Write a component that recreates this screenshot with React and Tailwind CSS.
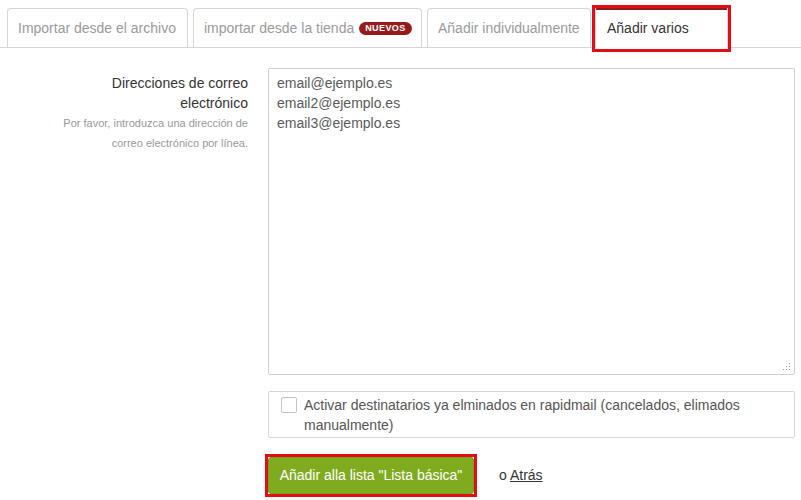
const tabs = [
  { label: 'Importar desde el archivo', w: 'w-[181px]' },
  { label: 'importar desde la tienda', badge: 'NUEVOS', w: 'w-[229px]' },
  { label: 'Añadir individualmente', w: 'w-[164px]' },
]

const emails = ['email@ejemplo.es', 'email2@ejemplo.es', 'email3@ejemplo.es']

function Grip() {
  return (
    <svg width="8" height="8" viewBox="0 0 8 8" className="self-end">
      <rect x="6" y="0" width="1" height="1" fill="#9a9a9a" />
      <rect x="6" y="3" width="1" height="1" fill="#9a9a9a" />
      <rect x="6" y="6" width="1" height="1" fill="#9a9a9a" />
      <rect x="3" y="3" width="1" height="1" fill="#9a9a9a" />
      <rect x="3" y="6" width="1" height="1" fill="#9a9a9a" />
      <rect x="0" y="6" width="1" height="1" fill="#9a9a9a" />
    </svg>
  )
}

export default function App() {
  return (
    <div className="h-[500px] w-[801px] overflow-hidden bg-white font-['Liberation_Sans',Arial,sans-serif] text-[14px]">
      <div className="flex h-[48px] items-end gap-[5px] border-b border-[#d6d6d6] pl-[7px]">
        {tabs.map((t) => (
          <div
            key={t.label}
            className={`${t.w} flex h-[39px] shrink-0 items-center gap-[5px] rounded-t-[4px] border border-b-0 border-[#d6d6d6] px-[10px] text-[#9a9a9a]`}
          >
            <span className="whitespace-nowrap">{t.label}</span>
            {t.badge && (
              <span className="flex h-[13px] items-center rounded-full bg-[#961c1c] px-[6px] text-[9px] font-bold leading-none tracking-[0.4px] text-white">
                {t.badge}
              </span>
            )}
          </div>
        ))}
        <div className="relative -mb-px -ml-px flex h-[40px] w-[133px] shrink-0 items-start rounded-t-[2px] border border-t-2 border-b-0 border-[#d6d6d6] border-t-[#8b1d1d] bg-white px-[10px] pt-[8px] text-[#333]">
          <span className="pl-px">Añadir varios</span>
          <span className="pointer-events-none absolute -inset-x-[4px] -bottom-[4px] -top-[5px] border-[3px] border-[#e30d17]" />
        </div>
      </div>

      <div className="mt-[20px] flex">
        <div className="w-[248px] pt-[5px] text-right leading-[20px]">
          <div className="pl-[100px] text-[#333]">Direcciones de correo electrónico</div>
          <div className="pl-[60px] text-[11px] text-[#999]">
            Por favor, introduzca una dirección de correo electrónico por línea.
          </div>
        </div>

        <div className="ml-[20px] w-[527px]">
          <div className="flex h-[307px] flex-col rounded-[2px] border border-[#cfcfcf] pb-[3px] pl-[8px] pr-[3px] pt-[4px] leading-[20px] text-[#5a5a5a]">
            {emails.map((e) => (
              <div key={e}>{e}</div>
            ))}
            <div className="mt-auto flex justify-end">
              <Grip />
            </div>
          </div>

          <div className="mt-[16px] flex gap-[7px] rounded-[2px] border border-[#d6d6d6] pb-[2px] pl-[12px] pr-[8px] pt-[3px] leading-[20px] text-[#555]">
            <span className="mt-[2px] h-[16px] w-[16px] shrink-0 rounded-[2px] border border-[#c4c4c4] bg-white" />
            <span>
              Activar destinatarios ya elminados en rapidmail (cancelados, elimados manualmente)
            </span>
          </div>

          <div className="mt-[19px] flex items-center">
            <div className="relative">
              <button className="h-[37px] w-[206px] rounded-[3px] border border-[#76a01a] bg-[#7fac1f] text-[14px] text-white">
                Añadir alla lista "Lista básica"
              </button>
              <span className="pointer-events-none absolute -inset-[3px] border-[3px] border-[#e30d17]" />
            </div>
            <span className="ml-[25px] text-[#333]">
              o <span className="underline">Atrás</span>
            </span>
          </div>
        </div>
      </div>
    </div>
  )
}
